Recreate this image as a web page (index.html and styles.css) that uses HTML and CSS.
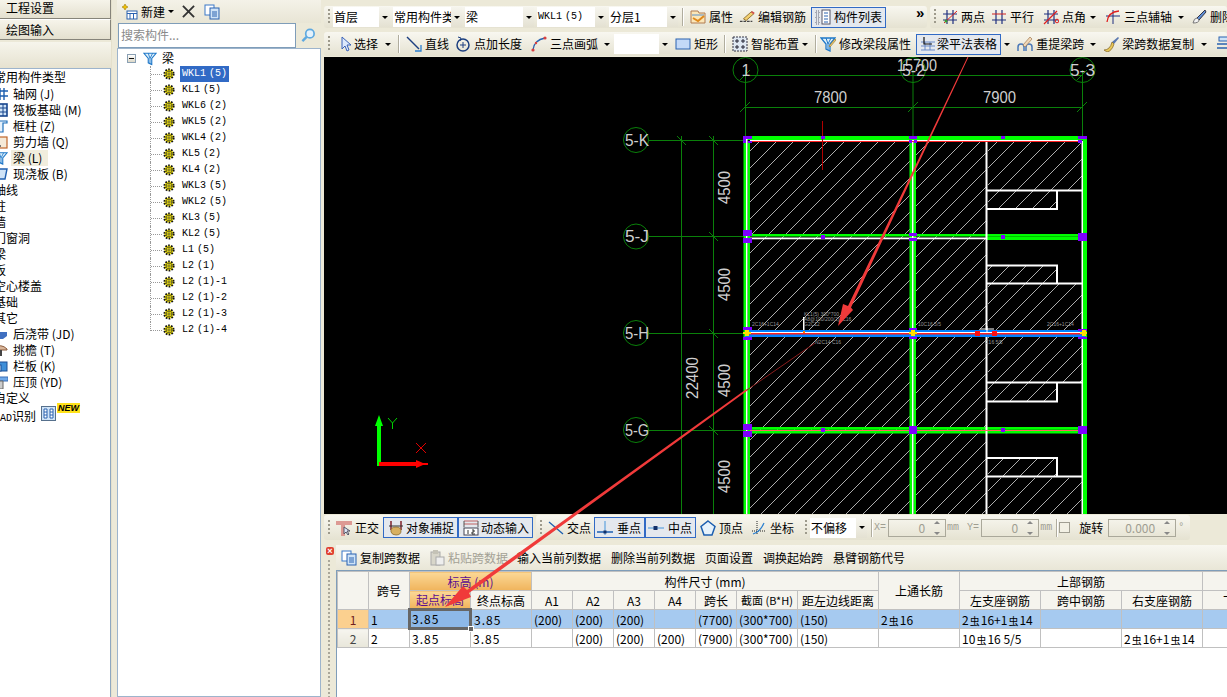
FILE: index.html
```html
<!DOCTYPE html>
<html lang="zh-CN">
<head>
<meta charset="utf-8">
<title>绘图输入</title>
<link rel="stylesheet" href="styles.css">
</head>
<body>
<svg class="defs" width="0" height="0">
  <symbol id="gear" viewBox="0 0 12 12"><circle cx="6" cy="6" r="4.6" fill="#ffef00" stroke="#111" stroke-width="2" stroke-dasharray="1.6 1.3"/><circle cx="6" cy="6" r="2.9" fill="#ffef00" stroke="#333" stroke-width=".7"/><path d="M3 6h6M6 3v6" stroke="#444" stroke-width=".7"/></symbol>
  <symbol id="funnel" viewBox="0 0 16 16"><path d="M1 2h14l-5 6v7l-4-2V8z" fill="#dff0fb" stroke="#1f78c8" stroke-width="1.3"/><path d="M6 2l2 6 3-6M8 8v6" fill="none" stroke="#1f78c8"/></symbol>
  <symbol id="hash" viewBox="0 0 16 16"><path d="M1 5h14M1 11h14" stroke="#1f2f7f" stroke-width="1.2"/><path d="M5 1v14M11 1v14" stroke="#1f2f7f" stroke-width="1.2"/></symbol>
</svg>
<div class="app">
  <aside class="nav">
    <div class="nav-btn nav-first">工程设置</div>
    <div class="nav-btn nav-second">绘图输入</div>
    <div class="nav-blank"></div>
    <ul class="nav-list">
      <li class="cat">常用构件类型</li>
      <li class="item"><svg class="ni" viewBox="0 0 14 14"><path d="M2 1v12M6 1v12M10 1v12M0 4h14M0 9h14" stroke="#1c5fb0" stroke-width="1.4"/></svg><span>轴网 (J)</span></li>
      <li class="item"><svg class="ni" viewBox="0 0 14 14"><rect x="1" y="1" width="12" height="12" fill="#cfe3f7" stroke="#16448c" stroke-width="1.6"/><path d="M1 5h12M1 9h12M5 1v12M9 1v12" stroke="#16448c"/></svg><span>筏板基础 (M)</span></li>
      <li class="item"><svg class="ni" viewBox="0 0 14 14"><path d="M1 2h12v2H9v9H5V4H1z" fill="#e6f1fb" stroke="#1f6fba" stroke-width="1.2"/></svg><span>框柱 (Z)</span></li>
      <li class="item"><svg class="ni" viewBox="0 0 14 14"><rect x="1" y="2" width="12" height="11" fill="#f5ead8" stroke="#c0662a" stroke-width="1.2"/><path d="M3 11h4" stroke="#777" stroke-width="2"/></svg><span>剪力墙 (Q)</span></li>
      <li class="item"><svg class="ni" viewBox="0 0 16 16"><use href="#funnel"/></svg><span class="sel-item">梁 (L)</span></li>
      <li class="item"><svg class="ni" viewBox="0 0 14 14"><path d="M1 2h12l-2 10H3z" fill="#cfe3f7" stroke="#1f5fb0" stroke-width="1.4"/></svg><span>现浇板 (B)</span></li>
      <li class="cat">轴线</li>
      <li class="cat">柱</li>
      <li class="cat">墙</li>
      <li class="cat">门窗洞</li>
      <li class="cat">梁</li>
      <li class="cat">板</li>
      <li class="cat">空心楼盖</li>
      <li class="cat">基础</li>
      <li class="cat">其它</li>
      <li class="item"><svg class="ni" viewBox="0 0 14 14"><path d="M0 5h13v4l-4 3H0z" fill="#3f6fc0"/><path d="M0 5h6v4H0z" fill="#bcd2f0"/></svg><span>后浇带 (JD)</span></li>
      <li class="item"><svg class="ni" viewBox="0 0 14 14"><path d="M0 5q7-5 13 1v1H0z" fill="#d8b59a" stroke="#8a5a3a"/><path d="M7 7v6" stroke="#444" stroke-width="2"/></svg><span>挑檐 (T)</span></li>
      <li class="item"><svg class="ni" viewBox="0 0 14 14"><rect x="4" y="3" width="9" height="9" fill="#3f8fd8" stroke="#1c4f96"/><rect x="0" y="6" width="7" height="6" fill="#cfe3f7" stroke="#1c4f96"/></svg><span>栏板 (K)</span></li>
      <li class="item"><svg class="ni" viewBox="0 0 14 14"><path d="M0 2h14v4H0z" fill="#6fa8e8" stroke="#3a6fb8"/><path d="M5 6h4v8H5z" fill="#ccc" stroke="#666"/></svg><span>压顶 (YD)</span></li>
      <li class="cat">自定义</li>
      <li class="cat cad"><span class="nm">CAD</span>识别<svg class="cad-ic" viewBox="0 0 15 15"><rect x=".5" y=".5" width="14" height="14" fill="#cfe3f7" stroke="#56708c"/><path d="M3 3h3v9H3zM9 3h3v9H9z" fill="#fff" stroke="#2a62b0"/><path d="M3 6h3M3 9h3M9 6h3M9 9h3" stroke="#2a62b0"/></svg><b class="new">NEW</b></li>
    </ul>
  </aside>
  <div class="split split-a"></div>
  <section class="tree-panel">
    <div class="tree-tools">
      <svg class="ic" viewBox="0 0 16 16"><path d="M3 0l1 2 2 1-2 1-1 2-1-2-2-1 2-1z" fill="#f2c200" stroke="#a07a00" stroke-width=".6"/><rect x="5" y="7" width="10" height="8" fill="#fff" stroke="#2a62b0"/><path d="M5 9.500h10M8 10v5M11.500 10v5" stroke="#2a62b0"/></svg>
      <span class="t-new">新建</span><i class="arrow t-arrow"></i>
      <svg class="ic t-del" viewBox="0 0 14 14"><path d="M1 1l12 12M13 1L1 13" stroke="#333" stroke-width="2"/></svg>
      <svg class="ic t-copy" viewBox="0 0 16 16"><rect x="1" y="1" width="9" height="10" fill="#fff" stroke="#3a78c8"/><rect x="6" y="4" width="9" height="11" fill="#cfe3f7" stroke="#2a62b0"/><path d="M8 8h5M8 10h5M8 12h5" stroke="#2a62b0"/></svg>
    </div>
    <div class="search"><div class="search-box">搜索构件...</div><div class="search-btn"><svg viewBox="0 0 16 16" width="15" height="15"><circle cx="9.500" cy="6" r="4.500" fill="#e4f2fc" stroke="#5ea9e0" stroke-width="1.800"/><path d="M6 9.500L1.500 14" stroke="#5ea9e0" stroke-width="2.600"/></svg></div></div>
    <div class="tree-box">
      <div class="root"><i class="minus"></i><svg class="root-ic" viewBox="0 0 16 16"><use href="#funnel"/></svg><span>梁</span></div>
      <ul class="tree">
        <li><i class="stub"></i><svg class="gear"><use href="#gear"/></svg><span class="nm sel">WKL1 (5)</span></li>
        <li><i class="stub"></i><svg class="gear"><use href="#gear"/></svg><span class="nm">KL1 (5)</span></li>
        <li><i class="stub"></i><svg class="gear"><use href="#gear"/></svg><span class="nm">WKL6 (2)</span></li>
        <li><i class="stub"></i><svg class="gear"><use href="#gear"/></svg><span class="nm">WKL5 (2)</span></li>
        <li><i class="stub"></i><svg class="gear"><use href="#gear"/></svg><span class="nm">WKL4 (2)</span></li>
        <li><i class="stub"></i><svg class="gear"><use href="#gear"/></svg><span class="nm">KL5 (2)</span></li>
        <li><i class="stub"></i><svg class="gear"><use href="#gear"/></svg><span class="nm">KL4 (2)</span></li>
        <li><i class="stub"></i><svg class="gear"><use href="#gear"/></svg><span class="nm">WKL3 (5)</span></li>
        <li><i class="stub"></i><svg class="gear"><use href="#gear"/></svg><span class="nm">WKL2 (5)</span></li>
        <li><i class="stub"></i><svg class="gear"><use href="#gear"/></svg><span class="nm">KL3 (5)</span></li>
        <li><i class="stub"></i><svg class="gear"><use href="#gear"/></svg><span class="nm">KL2 (5)</span></li>
        <li><i class="stub"></i><svg class="gear"><use href="#gear"/></svg><span class="nm">L1 (5)</span></li>
        <li><i class="stub"></i><svg class="gear"><use href="#gear"/></svg><span class="nm">L2 (1)</span></li>
        <li><i class="stub"></i><svg class="gear"><use href="#gear"/></svg><span class="nm">L2 (1)-1</span></li>
        <li><i class="stub"></i><svg class="gear"><use href="#gear"/></svg><span class="nm">L2 (1)-2</span></li>
        <li><i class="stub"></i><svg class="gear"><use href="#gear"/></svg><span class="nm">L2 (1)-3</span></li>
        <li class="last"><i class="stub"></i><svg class="gear"><use href="#gear"/></svg><span class="nm">L2 (1)-4</span></li>
      </ul>
    </div>
  </section>
  <div class="split split-b"></div>
  <main class="work">
    <div class="bars bars-top">
      <div class="strip s-a">
        <i class="grip"></i>
        <div class="combo c57"><span>首层</span><i class="cbtn"></i></div>
        <div class="combo c69"><span>常用构件类型</span><i class="cbtn"></i></div>
        <div class="combo c69"><span>梁</span><i class="cbtn"></i></div>
        <div class="combo c69"><span class="nm">WKL1 (5)</span><i class="cbtn"></i></div>
        <div class="combo c69 m1"><span>分层1</span><i class="cbtn"></i></div>
        <i class="sep"></i>
        <div class="tool"><svg class="ic" viewBox="0 0 16 16"><path d="M1 2h7l1 2h6v10H1z" fill="#fbe6b8" stroke="#b07a50"/><path d="M2 6h12" stroke="#5a90c8"/><path d="M3 9l5 3 6-5" fill="none" stroke="#e08a1c" stroke-width="2"/></svg><span>属性</span></div>
        <div class="tool"><svg class="ic" viewBox="0 0 18 16"><path d="M5 10L14 2l3 2-9 8z" fill="#f3d070" stroke="#8a6a2a"/><path d="M14 2l3 2" stroke="#d05050" stroke-width="2"/><path d="M1 13h14" stroke="#444" stroke-dasharray="3 1" stroke-width="1.400"/></svg><span>编辑钢筋</span></div>
        <div class="tool on ml2"><svg class="ic" viewBox="0 0 16 16"><rect x="1" y="2" width="3" height="3" fill="none" stroke="#667" stroke-dasharray="1 1"/><rect x="1" y="7" width="3" height="3" fill="none" stroke="#667" stroke-dasharray="1 1"/><rect x="1" y="12" width="3" height="3" fill="none" stroke="#667" stroke-dasharray="1 1"/><rect x="7" y="1" width="8" height="14" fill="#fff" stroke="#556"/><path d="M9 4h4M9 7h4M9 10h4M9 13h4" stroke="#2a62b0"/></svg><span>构件列表</span></div>
        <span class="more">»</span>
      </div>
      <div class="strip s-b">
        <i class="grip"></i>
        <div class="tool"><svg class="ic" viewBox="0 0 16 16"><use href="#hash"/><path d="M2 14L15 2" stroke="#e02020"/><circle cx="4" cy="12" r="1.500" fill="#3a9a30"/></svg><span>两点</span></div>
        <div class="tool"><svg class="ic" viewBox="0 0 16 16"><path d="M5 1v14M11 1v14M1 11h14" stroke="#1f2f7f" stroke-width="1.200"/><path d="M1 5h14" stroke="#d02020" stroke-width="1.200"/></svg><span>平行</span></div>
        <div class="tool ml3"><svg class="ic" viewBox="0 0 16 16"><use href="#hash"/><path d="M1 15L14 2" stroke="#e02020" stroke-width="1.200"/><circle cx="14" cy="12" r="1.800" fill="none" stroke="#e02020"/></svg><span>点角</span></div>
        <i class="arrow a1"></i>
        <div class="tool ml2"><svg class="ic" viewBox="0 0 16 16"><path d="M8 1v14M1 7h14" stroke="#1f2f7f"/><path d="M2 13Q3 3 14 2" fill="none" stroke="#e02020" stroke-width="1.300"/></svg><span>三点辅轴</span></div>
        <i class="arrow"></i>
        <div class="tool"><svg class="ic" viewBox="0 0 16 16"><path d="M6 9L14 1l1 2-7 8z" fill="#5f90d8" stroke="#334"/><path d="M2 14q1-5 4-5l2 2q0 3-6 3z" fill="#f2f2f2" stroke="#777"/></svg><span>删除</span></div>
      </div>
    </div>
    <div class="bars bars-second">
      <div class="strip s-full">
        <i class="grip"></i>
        <div class="tool t-sel ml2"><svg class="ic" viewBox="0 0 16 16"><path d="M4 1v12l3-3 2 5 2-1-2-5h4z" fill="#dce8fb" stroke="#3a62b8"/></svg><span>选择</span></div>
        <i class="arrow a4"></i><i class="sep"></i>
        <div class="tool"><svg class="ic" viewBox="0 0 16 16"><path d="M1 1l12 12" stroke="#1c3f80" stroke-width="1.400"/><path d="M15 9v6H9" stroke="#2a7fd0" stroke-width="1.300" fill="none"/></svg><span>直线</span></div>
        <div class="tool"><svg class="ic" viewBox="0 0 16 16"><circle cx="8" cy="9" r="6" fill="none" stroke="#1c3f80" stroke-width="1.500"/><path d="M8 6v6M5 9h6" stroke="#1c3f80"/><path d="M3 1l3 1-1 3" stroke="#1c3f80" fill="none"/></svg><span>点加长度</span></div>
        <div class="tool ml3"><svg class="ic" viewBox="0 0 16 16"><path d="M2 14Q3 4 14 2" fill="none" stroke="#2a62b0" stroke-width="1.300"/><circle cx="2" cy="14" r="1.600" fill="#d84040"/><circle cx="14" cy="2" r="1.600" fill="#d84040"/><circle cx="5" cy="7" r="1.200" fill="#d84040"/></svg><span>三点画弧</span></div>
        <i class="arrow"></i>
        <div class="combo c56 c-tall"><span></span><i class="cbtn"></i></div>
        <div class="tool"><svg class="ic" viewBox="0 0 16 16"><rect x="1" y="3" width="14" height="10" fill="#c3d9f8" stroke="#2a62b0"/></svg><span>矩形</span></div>
        <i class="sep"></i>
        <div class="tool"><svg class="ic" viewBox="0 0 16 16"><rect x="1" y="1" width="14" height="14" fill="#dfe8f2" stroke="#334" stroke-dasharray="2 1"/><path d="M5 3v4M3 5h4M11 3v4M9 5h4M5 9v4M3 11h4M11 9v4M9 11h4" stroke="#223"/></svg><span>智能布置</span></div>
        <i class="arrow a0"></i><i class="sep"></i>
        <div class="tool mln3"><svg class="ic" viewBox="0 0 16 16"><use href="#funnel"/><path d="M9 10l6-7 1 1-6 7z" fill="#f3d070" stroke="#8a6a2a" stroke-width=".6"/></svg><span>修改梁段属性</span></div>
        <div class="tool on t-lptable ml2"><svg class="ic" viewBox="0 0 16 16"><path d="M1 6h14M1 10h14M1 14h14M5 6v8M10 6v8" stroke="#6a8ac8"/><path d="M4 1v7h8" fill="none" stroke="#111" stroke-width="1.200"/></svg><span>梁平法表格</span></div>
        <i class="arrow"></i>
        <div class="tool"><svg class="ic" viewBox="0 0 16 16"><path d="M1 15v-4a3 3 0 0 1 6 0v4M9 15v-4a3 3 0 0 1 6 0v4" fill="none" stroke="#4a78b8" stroke-width="1.500"/><path d="M6 9l7-8 2 2-7 8z" fill="#f1d8b8" stroke="#a07a50" stroke-width=".7"/></svg><span>重提梁跨</span></div>
        <i class="arrow"></i>
        <div class="tool"><svg class="ic" viewBox="0 0 16 16"><path d="M9 6l6-5 1 1-5 6z" fill="#5a78b0"/><path d="M1 14q6 0 8-8l2 2q-2 7-7 8z" fill="#e8c858" stroke="#806020" stroke-width=".7"/></svg><span>梁跨数据复制</span></div>
        <i class="arrow a4"></i>
        <svg class="ic t-last" viewBox="0 0 16 16"><rect x="3" y="1" width="10" height="4" fill="#cfe3f7" stroke="#2a62b0"/><path d="M1 8h14M1 12h14" stroke="#2a62b0" stroke-width="1.400"/></svg>
      </div>
    </div>
    <div class="canvas">
      <svg class="cad" width="903" height="457" viewBox="324 57 903 457">
        <defs>
          <pattern id="hatch" patternUnits="userSpaceOnUse" width="17" height="17"><path d="M-1 18L18 -1" stroke="#d8d8d8" stroke-width=".8"/></pattern>
        </defs>
        <g fill="url(#hatch)">
          <rect x="750" y="141" width="160" height="373"/>
          <rect x="916" y="141" width="70" height="373"/>
          <rect x="988" y="142" width="94" height="48"/>
          <rect x="988" y="191" width="68" height="18"/>
          <rect x="988" y="266" width="68" height="18"/>
          <rect x="988" y="284" width="94" height="98"/>
          <rect x="988" y="383" width="68" height="18"/>
          <rect x="988" y="459" width="68" height="18"/>
          <rect x="988" y="478" width="94" height="36"/>
        </g>
        <g stroke="#0a800a" fill="none">
          <path d="M745.500 70V514M913 70V514M1082.500 70V514"/>
          <path d="M745 75.500H1082M745 107.500H1082"/>
          <path d="M649 140.500H745M649 236.500H745M649 333.500H745M649 430.500H745"/>
          <path d="M681.500 136V514M713.500 136V514"/>
          <path d="M740 112l10-10M908 112l10-10M1077 112l10-10M740 80l10-10M1077 80l10-10"/>
          <path d="M677 136l9 9M709 136l9 9M709 232l9 9M709 329l9 9M709 426l9 9"/>
          <circle cx="745.500" cy="70" r="12.500"/><circle cx="913" cy="70" r="12.500"/><circle cx="1082.500" cy="70" r="12.500"/>
          <circle cx="636" cy="140" r="12.500"/><circle cx="636" cy="236.500" r="12.500"/><circle cx="636" cy="333" r="12.500"/><circle cx="636" cy="430" r="12.500"/>
        </g>
        <g class="cad-text">
          <text x="746" y="76" text-anchor="middle">1</text>
          <text x="902" y="76" textLength="23" lengthAdjust="spacingAndGlyphs">5-2</text>
          <text x="897" y="71" textLength="40" lengthAdjust="spacingAndGlyphs">15700</text>
          <text x="1070" y="76" textLength="25" lengthAdjust="spacingAndGlyphs">5-3</text>
          <text x="814" y="103" textLength="33" lengthAdjust="spacingAndGlyphs">7800</text>
          <text x="983" y="103" textLength="33" lengthAdjust="spacingAndGlyphs">7900</text>
          <text x="625" y="146" textLength="24" lengthAdjust="spacingAndGlyphs">5-K</text>
          <text x="625" y="242" textLength="24" lengthAdjust="spacingAndGlyphs">5-J</text>
          <text x="625" y="339" textLength="24" lengthAdjust="spacingAndGlyphs">5-H</text>
          <text x="625" y="436" textLength="24" lengthAdjust="spacingAndGlyphs">5-G</text>
          <text transform="rotate(-90 730 204)" x="730" y="204" textLength="33" lengthAdjust="spacingAndGlyphs">4500</text>
          <text transform="rotate(-90 730 301)" x="730" y="301" textLength="33" lengthAdjust="spacingAndGlyphs">4500</text>
          <text transform="rotate(-90 730 397)" x="730" y="397" textLength="33" lengthAdjust="spacingAndGlyphs">4500</text>
          <text transform="rotate(-90 730 493)" x="730" y="493" textLength="33" lengthAdjust="spacingAndGlyphs">4500</text>
          <text transform="rotate(-90 698 399)" x="698" y="399" textLength="42" lengthAdjust="spacingAndGlyphs">22400</text>
        </g>
        <g fill="#00ff00">
          <rect x="743.500" y="136" width="2.500" height="378"/><rect x="747.500" y="141" width="2.500" height="373"/>
          <rect x="909.500" y="136" width="2.500" height="378"/><rect x="913.500" y="136" width="2.500" height="378"/>
          <rect x="1083" y="136" width="4" height="378"/>
          <rect x="743" y="136" width="344" height="4"/>
          <rect x="745" y="234" width="342" height="2.500"/><rect x="987" y="236.500" width="100" height="3.500"/>
          <rect x="745" y="427" width="342" height="2.800"/><rect x="745" y="431" width="342" height="2.500"/>
        </g>
        <g fill="#fff">
          <rect x="746" y="136" width="1.500" height="378"/>
          <rect x="912" y="141" width="1.500" height="373"/>
          <rect x="1081.500" y="141" width="1.500" height="373"/>
          <rect x="985.500" y="141" width="2" height="373"/>
          <rect x="750" y="140" width="332" height="1"/>
          <rect x="750" y="237.500" width="237" height="1.800"/>
          <rect x="987" y="189.500" width="96" height="2"/><rect x="987" y="208" width="71" height="2"/><rect x="1056" y="190" width="2" height="20"/>
          <rect x="987" y="264.500" width="71" height="2"/><rect x="1056" y="265" width="2" height="19"/><rect x="987" y="282.500" width="96" height="2"/>
          <rect x="987" y="381.500" width="96" height="2"/><rect x="987" y="400.500" width="71" height="2"/><rect x="1056" y="382" width="2" height="20"/>
          <rect x="987" y="457" width="71" height="2"/><rect x="1056" y="458" width="2" height="19"/><rect x="987" y="475.500" width="96" height="2"/>
          <rect x="803" y="317" width="1.500" height="15"/>
        </g>
        <rect x="750" y="141" width="332" height="1" fill="#ff2020"/>
        <rect x="750" y="430" width="332" height="1" fill="#ff6060"/>
        <rect x="745" y="330" width="340" height="7" fill="#0080ff"/>
        <rect x="745" y="332" width="340" height="1" fill="#fff"/>
        <rect x="745" y="333" width="340" height="1.500" fill="#ff2020"/>
        <path d="M822.500 121V170" stroke="#b00000"/>
        <g fill="#7f00ff">
          <rect x="743" y="136" width="9" height="3"/><rect x="743" y="139" width="3" height="4"/><rect x="748" y="141" width="4" height="2"/>
          <rect x="909" y="136" width="8" height="3"/><rect x="909" y="140" width="3" height="3"/><rect x="914" y="140" width="3" height="3"/>
          <rect x="1078" y="136" width="9" height="3"/><rect x="1078" y="140" width="4" height="3"/>
          <rect x="821" y="136" width="4" height="3"/><rect x="1001" y="136" width="4" height="3"/>
          <rect x="743" y="230" width="9" height="6"/><rect x="743" y="238" width="9" height="5"/>
          <rect x="909" y="233" width="8" height="3"/><rect x="909" y="238" width="8" height="3"/>
          <rect x="1078" y="233" width="9" height="8"/>
          <rect x="821" y="235" width="4" height="4"/><rect x="1001" y="235" width="4" height="4"/>
          <rect x="743" y="327" width="9" height="3"/><rect x="743" y="337" width="9" height="3"/><rect x="909" y="328" width="8" height="2"/><rect x="909" y="337" width="8" height="2"/><rect x="1078" y="329" width="9" height="2"/><rect x="1078" y="337" width="9" height="2"/>
          <rect x="743" y="424" width="9" height="6"/><rect x="743" y="431" width="9" height="6"/>
          <rect x="909" y="426" width="8" height="8"/><rect x="1078" y="426" width="9" height="8"/>
          <rect x="821" y="428" width="4" height="4"/><rect x="1001" y="428" width="4" height="4"/>
        </g>
        <g fill="#ffe000">
          <rect x="745" y="330" width="4" height="6"/><rect x="743" y="332" width="8" height="2"/>
          <rect x="911" y="330" width="4" height="6"/><rect x="909" y="332" width="8" height="2"/>
          <rect x="1082" y="330" width="4" height="6"/><rect x="1080" y="332" width="7" height="2"/>
        </g>
        <rect x="975" y="331" width="5" height="5" fill="#ff1010"/><rect x="992" y="331" width="5" height="5" fill="#ff1010"/>
        <rect x="803" y="331" width="2" height="2" fill="#ff8000"/>
        <path d="M980 329h14M987 326v6" stroke="#fff"/>
        <g class="tiny">
          <text x="804" y="316">KL1(5) 300*700</text>
          <text x="804" y="321">A8@100/200(2)2C16</text>
          <text x="804" y="326">G2C12</text>
          <text x="752" y="326">2C16+1C14</text>
          <text x="918" y="326">10C16 5/5</text>
          <text x="1047" y="326">2C16+1C14</text>
          <text x="815" y="344">N2C14 C16</text>
          <text x="985" y="344">C16 5/5</text>
        </g>
        <path d="M377 466V426h-2l4-11 4 11h-2v40z" fill="#00ff00"/>
        <path d="M379 462h37v-2l7 3h5v2h-5l-7 3v-2h-37z" fill="#ff0000"/>
        <path d="M388 418l4.500 5 4.500-5M392.500 423v6" stroke="#00d000" fill="none"/>
        <path d="M416 443l10 10M426 443l-10 10" stroke="#e00000"/>
      </svg>
    </div>
    <div class="bars bars-status">
      <div class="strip s-c">
        <i class="grip"></i>
        <div class="tool"><svg class="ic" viewBox="0 0 16 16"><path d="M0 1h16v4H9v11H5V5H0z" fill="#dd9a94"/><path d="M8 7v7l2-2 2 3 1-1-2-3h3z" fill="#dfe8f8" stroke="#556"/></svg><span>正交</span></div>
        <div class="tool on cap ml1"><svg class="ic" viewBox="0 0 16 16"><path d="M3 1v9M13 1v9" stroke="#80202a" stroke-width="1.500"/><path d="M1 6h14" stroke="#333"/><path d="M3 12q-1-5 5-5 5 0 5 4 0 4-5 4-4 0-5-3z" fill="#d8b060" stroke="#806020" stroke-width=".7"/></svg><span>对象捕捉</span></div>
        <div class="tool on cap"><svg class="ic" viewBox="0 0 16 16"><path d="M1 1h14M1 4h14" stroke="#c06060"/><path d="M1 1v6M15 1v6" stroke="#555"/><rect x="1" y="8" width="14" height="7" fill="#fff" stroke="#445"/><path d="M5 10v4M9 10h2v2H9v2h3" stroke="#000" fill="none" stroke-width=".8"/></svg><span>动态输入</span></div>
      </div>
      <div class="strip s-d">
        <i class="grip"></i>
        <div class="tool"><svg class="ic" viewBox="0 0 16 16"><path d="M1 2l14 12" stroke="#1c5fb0" stroke-width="1.300"/><path d="M15 2L1 14" stroke="#68b8e8" stroke-width="1.300"/></svg><span>交点</span></div>
        <div class="tool on pt"><svg class="ic" viewBox="0 0 16 16"><path d="M8 1v14" stroke="#7ab0e0" stroke-width="1.500"/><path d="M0 12h16" stroke="#1c5fb0" stroke-width="1.500"/><rect x="6.500" y="10.500" width="3" height="3" fill="#12306a"/></svg><span>垂点</span></div>
        <div class="tool on pt"><svg class="ic" viewBox="0 0 16 16"><path d="M0 8h16" stroke="#7ab0e0" stroke-width="1.500"/><rect x="5.500" y="6" width="4" height="4" fill="#12306a"/></svg><span>中点</span></div>
        <div class="tool ml1"><svg class="ic" viewBox="0 0 16 16"><path d="M8 1l7 5.500-3 8.500H4L1 6.500z" fill="#e6f2fb" stroke="#1c5fb0" stroke-width="1.500"/></svg><span>顶点</span></div>
        <div class="tool ml2"><svg class="ic" viewBox="0 0 16 16"><path d="M6 1v14M1 11h14" stroke="#222" stroke-dasharray="1 1"/><path d="M2 14Q9 12 13 3" fill="none" stroke="#2a7fd0" stroke-width="1.200"/></svg><span>坐标</span></div>
        <i class="grip g-second"></i>
        <div class="combo c57 m1"><span>不偏移</span><i class="cbtn"></i></div>
        <i class="sep"></i>
        <span class="lbl l-x">X=</span>
        <div class="spin s58"><span>0</span><i class="spin-b"></i></div>
        <span class="lbl l-mm">mm</span>
        <span class="lbl">Y=</span>
        <div class="spin s58"><span>0</span><i class="spin-b"></i></div>
        <span class="lbl l-mm l-last">mm</span>
        <i class="sep"></i>
        <i class="check"></i>
        <span class="rot">旋转</span>
        <div class="spin s68"><span>0.000</span><i class="spin-b"></i></div>
        <span class="lbl">°</span>
      </div>
    </div>
    <div class="props">
      <div class="rail"><i class="close"></i><i class="rail-dots"></i></div>
      <div class="props-main">
        <div class="p-tools">
          <div class="tool"><svg class="ic" viewBox="0 0 16 16"><rect x="1" y="1" width="9" height="10" fill="#fff" stroke="#3a78c8"/><rect x="6" y="4" width="9" height="11" fill="#cfe3f7" stroke="#2a62b0"/><path d="M8 8h5M8 10h5M8 12h5" stroke="#2a62b0"/></svg><span>复制跨数据</span></div>
          <div class="tool off"><svg class="ic" viewBox="0 0 16 16"><rect x="2" y="2" width="9" height="13" fill="#d8d6ca" stroke="#aaa"/><rect x="4" y="0" width="5" height="4" fill="#c4c2b6"/><rect x="7" y="7" width="8" height="8" fill="#eee" stroke="#aaa"/></svg><span>粘贴跨数据</span></div>
          <div class="tool ptxt"><span>输入当前列数据</span></div>
          <div class="tool ptxt"><span>删除当前列数据</span></div>
          <div class="tool ptxt"><span>页面设置</span></div>
          <div class="tool ptxt"><span>调换起始跨</span></div>
          <div class="tool ptxt"><span>悬臂钢筋代号</span></div>
        </div>
        <div class="grid-wrap">
          <table class="grid">
            <colgroup>
              <col class="w31"><col class="w41"><col class="w61"><col class="w61"><col class="w41"><col class="w41"><col class="w41"><col class="w41"><col class="w41"><col class="w61"><col class="w81"><col class="w81"><col class="w81"><col class="w81"><col class="w81"><col class="w25">
            </colgroup>
            <tr class="hr">
              <th rowspan="2"></th>
              <th rowspan="2">跨号</th>
              <th colspan="2" class="hot">标高 (m)</th>
              <th colspan="7">构件尺寸 (mm)</th>
              <th rowspan="2">上通长筋</th>
              <th colspan="3">上部钢筋</th>
              <th></th>
            </tr>
            <tr class="hr">
              <th class="hot">起点标高</th>
              <th>终点标高</th>
              <th>A1</th><th>A2</th><th>A3</th><th>A4</th>
              <th>跨长</th><th class="sz">截面 (B*H)</th><th>距左边线距离</th>
              <th>左支座钢筋</th><th>跨中钢筋</th><th>右支座钢筋</th><th class="clip">下</th>
            </tr>
            <tr class="row cur">
              <th class="rh hot-rh">1</th>
              <td>1</td><td class="active num">3.85<i class="handle"></i></td><td class="num">3.85</td>
              <td>(200)</td><td>(200)</td><td>(200)</td><td></td><td>(7700)</td><td>(300*700)</td><td>(150)</td>
              <td>2<span class="bar">虫</span>16</td><td>2<span class="bar">虫</span>16+1<span class="bar">虫</span>14</td><td></td><td></td><td></td>
            </tr>
            <tr class="row">
              <th class="rh">2</th>
              <td>2</td><td class="dark-l num">3.85</td><td class="num">3.85</td>
              <td></td><td>(200)</td><td>(200)</td><td>(200)</td><td>(7900)</td><td>(300*700)</td><td>(150)</td>
              <td></td><td>10<span class="bar">虫</span>16 5/5</td><td></td><td>2<span class="bar">虫</span>16+1<span class="bar">虫</span>14</td><td></td>
            </tr>
          </table>
        </div>
      </div>
    </div>
  </main>
  <svg class="overlay" viewBox="0 0 1227 697" width="1227" height="697">
    <path d="M968.400 57.200L967.600 56.800L848 306L843 304L838 326L853 310L851 307.500z" fill="#f03a3a"/>
    <path d="M815 343L747 390" stroke="#8a1c1c" fill="none"/>
    <path d="M747.500 390.500L746.500 389L467 590L463 586L445 607L471 597L469 593z" fill="#f03a3a"/>
  </svg>
</div>
</body>
</html>
```

FILE: styles.css
```css
* { box-sizing: border-box; }
html, body { margin: 0; padding: 0; }
body {
  width: 1227px;
  height: 697px;
  overflow: hidden;
  background: #ece9d8;
  font: 12px/16px "Noto Sans CJK SC", "Liberation Sans", sans-serif;
  color: #000;
}
i { font-style: normal; display: block; }
ul { list-style: none; margin: 0; padding: 0; }
.defs { position: absolute; }

.app {
  position: relative;
  display: grid;
  grid-template-columns: 111px 6px 204px 3px 903px;
  width: 1227px;
  height: 697px;
  overflow: hidden;
}
.split { background: #ece9d8; }
.split-a { border-left: 1px solid #e4e0cc; }
.ml1 { margin-left: 1px; }
.ml2 { margin-left: 2px; }
.ml3 { margin-left: 3px; }
.mln3 { margin-left: -3px; }

/* left nav */
.nav { display: flex; flex-direction: column; height: 697px; overflow: hidden; }
.nav-btn {
  padding-left: 6px;
  background: linear-gradient(#f6f4ea, #e4e0cf);
  border-bottom: 1px solid #86847a;
  border-right: 1px solid #86847a;
  white-space: nowrap;
}
.nav-first { height: 19px; line-height: 15px; }
.nav-second { height: 21px; line-height: 20px; border-top: 1px solid #fff; }
.nav-blank {
  height: 26px;
  margin-top: 2px;
  background: linear-gradient(#f6f5ec, #e6e2d0);
  flex: none;
}
.nav-list {
  flex: 1;
  background: #fff;
  border-top: 1px solid #9db4cc;
  border-right: 1px solid #8ea7c0;
  padding-top: 1px;
  overflow: hidden;
}
.cat, .item { height: 16px; line-height: 16px; margin-left: -6px; white-space: nowrap; display: flex; align-items: center; }
.cat:first-child { line-height: 14px; align-items: flex-start; }
.ni { width: 14px; height: 14px; flex: none; margin-right: 3px; }
.item span { padding: 0 2px; }
.sel-item { background: #f0eddd; width: 37px; height: 16px; }
.cad-ic { width: 15px; height: 15px; margin-left: 5px; flex: none; }
.new {
  font: italic bold 9px/10px "Liberation Sans", sans-serif;
  background: #ffe21a;
  padding: 0 1px;
  margin-left: 1px;
  position: relative;
  top: -10px;
}

/* tree panel */
.tree-panel { display: flex; flex-direction: column; height: 697px; }
.tree-tools { height: 23px; display: flex; align-items: center; padding-left: 5px; background: linear-gradient(#f4f2e8, #e8e5d5); }
.ic { width: 16px; height: 16px; flex: none; }
.t-new { margin-left: 3px; }
.t-arrow { margin-left: 3px; margin-right: 4px; }
.t-del { width: 13px; height: 13px; margin-left: 4px; }
.t-copy { margin-left: 9px; }
.search { height: 25px; display: flex; background: #e8e5d5; }
.search-box { width: 178px; margin-left: 1px; background: #fff; border: 1px solid #7f9db9; color: #8a8a8a; padding: 3px 2px; font-size: 12px; white-space: nowrap; }
.search-btn { flex: 1; display: flex; align-items: center; justify-content: center; background: #ece9d8; }
.tree-box { flex: 1; background: #fff; border: 1px solid #9db4cc; padding: 1px 0 0 9px; }
.root { height: 16px; display: flex; align-items: center; }
.minus { width: 9px; height: 9px; border: 1px solid #8aa0b4; background: linear-gradient(#fff, #dcd8c8); flex: none; }
.minus::after { content: ""; display: block; width: 5px; height: 1px; background: #111; margin: 3px 1px; }
.root-ic { width: 14px; height: 15px; margin-left: 7px; }
.root span { margin-left: 5px; }
.tree { margin-left: 23px; }
.tree li { height: 16px; display: flex; align-items: center; border-left: 1px dotted #999; }
.tree li.last { border-left-color: transparent; }
.tree li .stub { width: 11px; height: 9px; border-bottom: 1px dotted #999; align-self: flex-start; flex: none; }
.tree li.last .stub { border-left: 1px dotted #999; margin-left: -1px; width: 12px; }
.gear { width: 12px; height: 12px; flex: none; margin-left: 1px; }
.nm { font: 10px/16px "Liberation Mono", monospace; word-spacing: -3px; white-space: nowrap; }
.tree .nm { margin-left: 5px; padding: 0 2px; }
.nm.sel { background: #316ac5; color: #fff; width: 49px; height: 16px; }

/* top bars */
.work { display: flex; flex-direction: column; width: 903px; height: 697px; overflow: hidden; }
.bars { display: flex; flex: none; }
.bars-top { height: 28px; padding-top: 6px; gap: 3px; }
.bars-second { height: 29px; padding-top: 4px; padding-bottom: 1px; }
.strip {
  height: 100%;
  display: flex;
  align-items: center;
  background: linear-gradient(#f8f7f0, #e5e2d1);
  border-radius: 3px;
  white-space: nowrap;
  overflow: hidden;
  flex: none;
}
.s-a { width: 603px; }
.s-b { flex: 1; min-width: 0; }
.s-full { width: 903px; }
.grip { width: 2px; height: 16px; margin: 0 3px 0 4px; flex: none; background: repeating-linear-gradient(#9d9a8c 0 2px, transparent 2px 4px); }
.sep { width: 1px; height: 18px; background: #b0ad9e; border-right: 1px solid #fff; margin: 0 3px; flex: none; box-sizing: content-box; }
.tool { display: flex; align-items: center; gap: 3px; padding: 0 2px; height: 21px; border: 1px solid transparent; flex: none; }
.tool.on { background: #e4e8ee; border-color: #316ac5; padding: 0 3px; }
.more { margin-left: 30px; font: bold 15px/14px "Liberation Sans", sans-serif; align-self: flex-start; margin-top: 0; }
.t-sel { gap: 0; }
.tool.t-lptable { gap: 1px; }
.t-last { margin-left: 5px; }
.arrow { width: 0; height: 0; border: 3px solid transparent; border-top: 3px solid #000; border-bottom: 0; margin: 0 4px 0 3px; flex: none; }
.a0 { margin-left: 0; }
.a1 { margin-left: 1px; }
.a4 { margin-left: 4px; }

.combo { display: flex; height: 20px; background: #fff; margin-right: 3px; flex: none; align-items: center; overflow: hidden; }
.combo > span { flex: 1; min-width: 0; overflow: hidden; padding-left: 1px; white-space: nowrap; }
.combo .nm { line-height: 20px; }
.c57 { width: 57px; }
.c69 { width: 69px; }
.c56 { width: 56px; margin-right: 2px; }
.combo.m1 { margin-right: 1px; }
.cbtn { width: 11px; height: 100%; background: linear-gradient(#f6f5ee, #e4e1d2); display: flex; align-items: center; justify-content: center; flex: none; }
.cbtn::after { content: ""; border: 3px solid transparent; border-top: 3px solid #000; border-bottom: 0; }

/* canvas */
.canvas { height: 457px; flex: none; background: #000; overflow: hidden; }
.cad { display: block; }
.cad-text text { font: 16px "Liberation Sans", sans-serif; fill: #cfcfcf; }
.tiny text { font: 5px "Liberation Sans", sans-serif; fill: #9a9a9a; }

/* status toolbar */
.bars-status { height: 26px; padding-top: 1px; gap: 3px; }
.s-c { width: 209px; }
.s-d { width: 654px; }
.tool.cap { gap: 2px; padding: 0 3px 0 4px; }
.tool.pt { gap: 4px; padding: 0 3px 0 2px; }
.g-second { margin-left: 8px; }
.lbl { font: 10px/14px "Liberation Mono", monospace; color: #a09e92; margin-right: 2px; }
.l-x { margin-left: -2px; }
.l-mm { margin-left: 1px; margin-right: 8px; }
.l-mm.l-last { margin-right: 1px; }
.spin { height: 18px; border: 1px solid #aaa89a; display: flex; align-items: center; color: #a09e92; flex: none; }
.spin span { flex: 1; text-align: right; padding-right: 6px; }
.spin-b { width: 14px; height: 14px; position: relative; flex: none; }
.spin-b::before, .spin-b::after { content: ""; position: absolute; left: 3px; border: 3px solid transparent; }
.spin-b::before { top: 0; border-bottom: 3px solid #888; border-top: 0; }
.spin-b::after { bottom: 0; border-top: 3px solid #888; border-bottom: 0; }
.s58 { width: 58px; }
.s68 { width: 68px; margin-right: 2px; }
.check { width: 11px; height: 11px; border: 1px solid #a09e92; flex: none; background: #f2f0e4; margin: 0 9px 0 -2px; }
.rot { margin-right: 5px; }

/* props */
.props { flex: 1; display: flex; min-height: 0; }
.rail { width: 12px; flex: none; display: flex; flex-direction: column; align-items: flex-start; padding: 7px 0 0 2px; }
.close { width: 8px; height: 8px; background: #e04030; border-radius: 2px; }
.close::after { content: "×"; display: block; color: #fff; font: bold 9px/8px "Liberation Sans", sans-serif; text-align: center; }
.rail-dots { width: 2px; flex: 1; margin: 5px 0 0 2px; background: repeating-linear-gradient(#aaa79a 0 2px, transparent 2px 4px); }
.props-main { flex: 1; min-width: 0; display: flex; flex-direction: column; }
.p-tools { height: 25px; margin-top: 5px; flex: none; display: flex; align-items: center; background: linear-gradient(#f8f7f0, #e9e6d7); white-space: nowrap; padding-left: 1px; }
.p-tools .tool { padding: 0 3px; margin-right: 1px; }
.off { color: #a3a195; }
.p-tools .ptxt { margin-right: 2px; }
.grid-wrap { flex: 1; background: #fff; border-top: 1px solid #7f9db9; border-left: 1px solid #7f9db9; overflow: hidden; }
.grid { border-collapse: collapse; table-layout: fixed; width: 890px; }
.w25 { width: 25px; } .w31 { width: 31px; } .w41 { width: 41px; } .w61 { width: 61px; } .w81 { width: 81px; }
.grid th, .grid td { border: 1px solid #c0c0c0; padding: 0 2px; font-weight: 400; white-space: nowrap; overflow: hidden; height: 19px; line-height: 15px; }
.grid th { background: #f5f4ee; text-align: center; }
.grid th.sz { font-size: 11px; padding: 0 1px; }
.grid .hr th.hot { background: linear-gradient(#fbd896, #f0b45c); color: #5a0d90; }
.grid th.clip { text-align: left; padding-left: 20px; }
.grid td { font-size: 12px; }
.grid td.num { letter-spacing: 1px; }
.grid .rh { background: linear-gradient(#f6f5ef, #e8e6da); color: #444; }
.grid .rh.hot-rh { background: #fbd08f; color: #702020; }
.row.cur td { background: #a6caf0; }
.grid .row.cur td.active { background: #8db8e8; border: 3px solid #666; position: relative; overflow: visible; padding: 0 1px; line-height: 14px; height: 18px; }
.handle { position: absolute; right: -5px; bottom: -5px; width: 6px; height: 6px; background: #666; border: 1px solid #fff; z-index: 1; }
.grid td.dark-l { border-left: 1px solid #000; }
.bar { font-size: 10px; line-height: 10px; margin: 0 1px; }
.overlay { position: absolute; left: 0; top: 0; pointer-events: none; }
```
